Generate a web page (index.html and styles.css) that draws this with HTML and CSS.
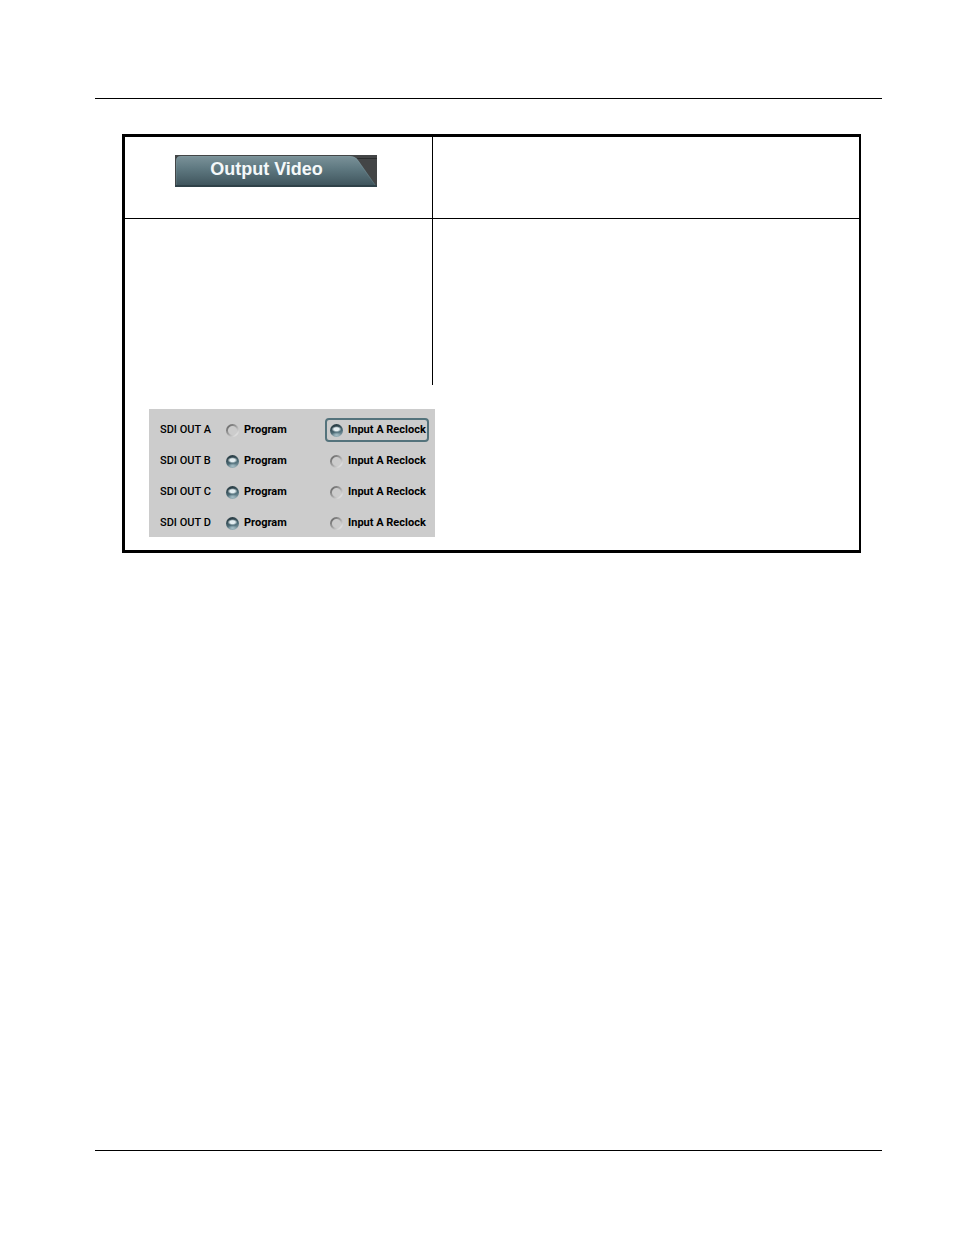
FILE: index.html
```html
<!DOCTYPE html>
<html lang="en">
<head>
    <meta charset="UTF-8">
    <meta name="viewport" content="width=device-width, initial-scale=1.0">
    <title>Output Video</title>
    <link rel="stylesheet" href="styles.css">
</head>
<body>
    <main>
        <div class="frame">
            <div class="row heading-row">
                <div class="cell">
                    <button type="button" class="tab">
                        <svg class="tab-shape" viewBox="0 0 202 32" preserveAspectRatio="none" aria-hidden="true">
                            <defs>
                                <linearGradient id="tab-fill" x1="0" y1="0" x2="0" y2="1">
                                    <stop offset="0" stop-color="#7b9299"/>
                                    <stop offset="0.4" stop-color="#5f7981"/>
                                    <stop offset="1" stop-color="#3c5159"/>
                                </linearGradient>
                            </defs>
                            <rect width="202" height="32" fill="#434546"/>
                            <path d="M182 3.500H202" stroke="#2b2d2e"/>
                            <path d="M1 32V6Q1 1 6 1H175Q180 1 183 5L202 32Z" fill="url(#tab-fill)"/>
                            <path d="M1.500 30V6Q1.500 1.500 6 1.500H175Q180 1.500 183 6L200 30" fill="none" stroke="#92a8ae" stroke-opacity="0.2"/>
                            <path d="M0 31H202" stroke="#2f4148" stroke-width="2"/>
                        </svg>
                        <span>Output Video</span>
                    </button>
                </div>
                <div class="cell"></div>
            </div>
            <div class="row body-row">
                <div class="cell"></div>
                <div class="cell"></div>
            </div>
            <div class="panel-row">
                <form class="panel">
                    <span class="name" id="out-a">SDI OUT A</span>
                    <label class="option"><input type="radio" name="sdi-a" aria-describedby="out-a">Program</label>
                    <label class="option active"><input type="radio" name="sdi-a" aria-describedby="out-a" checked>Input A Reclock</label>

                    <span class="name" id="out-b">SDI OUT B</span>
                    <label class="option"><input type="radio" name="sdi-b" aria-describedby="out-b" checked>Program</label>
                    <label class="option"><input type="radio" name="sdi-b" aria-describedby="out-b">Input A Reclock</label>

                    <span class="name" id="out-c">SDI OUT C</span>
                    <label class="option"><input type="radio" name="sdi-c" aria-describedby="out-c" checked>Program</label>
                    <label class="option"><input type="radio" name="sdi-c" aria-describedby="out-c">Input A Reclock</label>

                    <span class="name" id="out-d">SDI OUT D</span>
                    <label class="option"><input type="radio" name="sdi-d" aria-describedby="out-d" checked>Program</label>
                    <label class="option"><input type="radio" name="sdi-d" aria-describedby="out-d">Input A Reclock</label>
                </form>
            </div>
        </div>
    </main>
</body>
</html>
```
FILE: styles.css
```css
* {
    box-sizing: border-box;
}

body {
    margin: 0;
    padding: 98px 72px 84px 95px;
    min-height: 100vh;
    display: flex;
    flex-direction: column;
    background: #fff;
    color: #000;
    font-family: Roboto, "Liberation Sans", sans-serif;
}

/* page rules above and below the content */
main {
    flex: 1;
    padding: 35px 21px 35px 27px;
    border-top: 1px solid #000;
    border-bottom: 1px solid #000;
}

.frame {
    border: 3px solid #000;
    border-right-width: 2px;
}

.row {
    display: grid;
    grid-template-columns: 308px 1fr;
}

.cell:first-child {
    border-right: 1px solid #000;
}

.heading-row {
    min-height: 82px;
    border-bottom: 1px solid #000;
}

.heading-row .cell {
    padding: 18px 50px;
}

.body-row {
    min-height: 166px;
}

.tab {
    position: relative;
    display: block;
    width: 202px;
    height: 32px;
    padding: 0 19px 4px 0;
    border: none;
    background: none;
    color: #f4f8f9;
    font: bold 18px/28px "Liberation Sans", Arial, sans-serif;
    cursor: pointer;
}

.tab-shape {
    position: absolute;
    inset: 0;
    width: 100%;
    height: 100%;
}

.tab span {
    position: relative;
}

.panel-row {
    padding: 24px 24px 13px;
}

.panel {
    display: grid;
    grid-template-columns: 61px 104px 104px;
    grid-auto-rows: 24px;
    row-gap: 7px;
    align-items: center;
    width: max-content;
    padding: 9px 6px 2px 11px;
    background: #ccc;
    font-size: 11px;
    font-weight: bold;
    line-height: 20px;
}

.name {
    font-weight: 500;
}

.option {
    display: flex;
    align-items: center;
    gap: 5px;
    height: 24px;
    padding-left: 3px;
    border: 2px solid transparent;
    border-radius: 4px;
    white-space: nowrap;
}

.option.active {
    border-color: #54737c;
}

.option input {
    appearance: none;
    flex: none;
    width: 13px;
    height: 13px;
    margin: 0;
    border-radius: 50%;
    background:
        radial-gradient(circle, #ccc 4px, transparent 5px),
        linear-gradient(135deg, #6c6c6c 15%, #a5a5a5 50%, #e4e4e4 85%);
}

.option input:checked {
    background:
        radial-gradient(ellipse 5px 3px at 50% 40%, #e4eef1 50%, transparent 100%),
        radial-gradient(ellipse 5px 3px at 50% 85%, #a9c2ca, transparent),
        linear-gradient(160deg, #2c4048 20%, #4f6e79 60%, #90a7af 95%);
}
```
